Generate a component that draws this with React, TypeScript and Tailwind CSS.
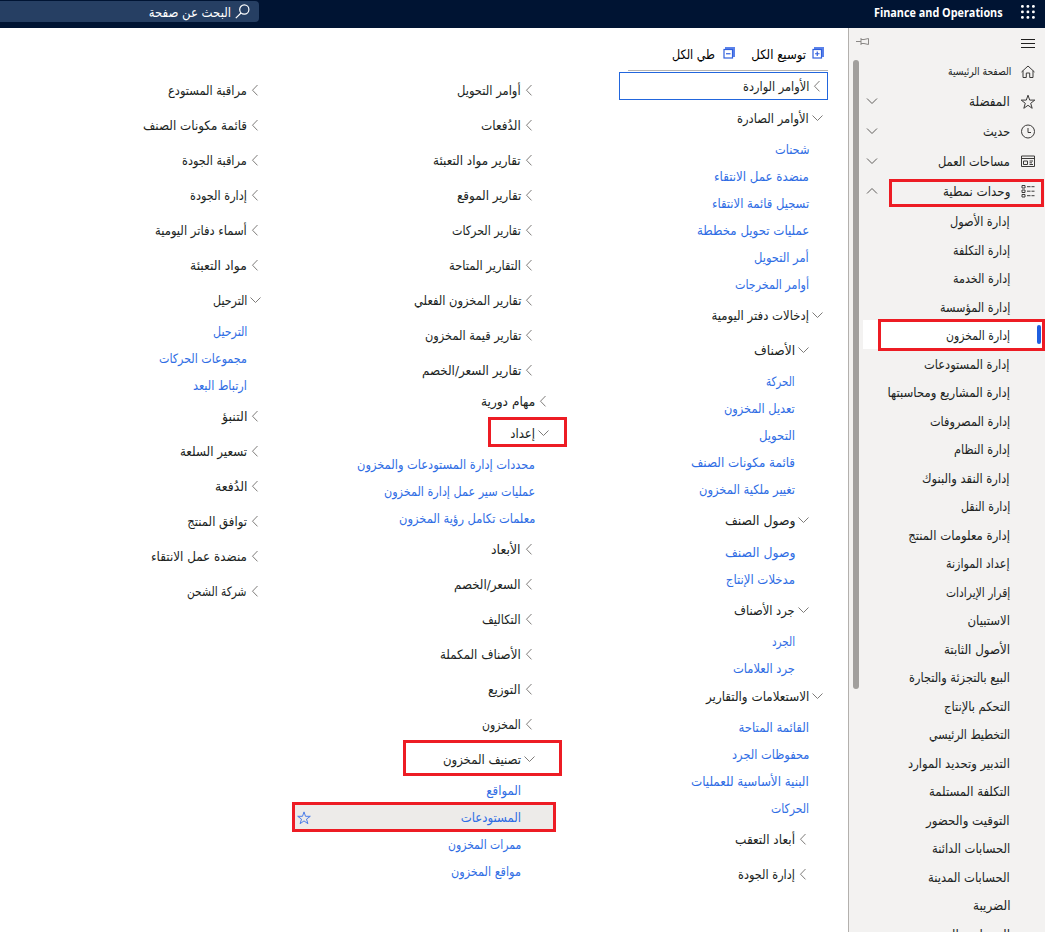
import { useLayoutEffect, useRef, useState, type ReactNode } from "react";

/** A label drawn at a given width, anchored to its reading start. */
function Label({ text, w, className = "", ltr = false }: { text: string; w: number; className?: string; ltr?: boolean }) {
  const ref = useRef<HTMLSpanElement>(null);
  const [scale, setScale] = useState(1);
  useLayoutEffect(() => {
    if (ref.current) setScale(w / ref.current.offsetWidth);
  }, [w]);
  return (
    <span
      ref={ref}
      dir={ltr ? "ltr" : "rtl"}
      className={`inline-block shrink-0 origin-right whitespace-nowrap ${className}`}
      style={{ transform: `scaleX(${scale})` }}
    >
      {text}
    </span>
  );
}

function Chevron({ open }: { open: boolean }) {
  return (
    <svg viewBox="0 0 12 12" className="mb-[2px] ml-[2px] h-3 w-3 shrink-0" fill="none" stroke="#7d7b79" strokeWidth="1">
      {open ? <path d="M1.5 3.5 6.5 8.5 11.5 3.5" /> : <path d="M8.5 1 3.5 6.2 8.5 11.4" />}
    </svg>
  );
}

type Row = { k: "h" | "o" | "l"; lv: 0 | 1; t: string; w: number; m?: string; mark?: string; hot?: boolean };

const h = (lv: 0 | 1, t: string, w: number, m?: string): Row => ({ k: "h", lv, t, w, m });
const o = (lv: 0 | 1, t: string, w: number, m?: string, mark?: string): Row => ({ k: "o", lv, t, w, m, mark });
const l = (lv: 0 | 1, t: string, w: number, m?: string): Row => ({ k: "l", lv, t, w, m });

const columnOne: Row[] = [
  o(0, "الأوامر الصادرة", 72, "mt-[1px]"),
  l(0, "شحنات", 34),
  l(0, "منضدة عمل الانتقاء", 95),
  l(0, "تسجيل قائمة الانتقاء", 97),
  l(0, "عمليات تحويل مخططة", 112),
  l(0, "أمر التحويل", 55),
  l(0, "أوامر المخرجات", 74),
  o(0, "إدخالات دفتر اليومية", 98),
  o(1, "الأصناف", 41),
  l(1, "الحركة", 29),
  l(1, "تعديل المخزون", 71),
  l(1, "التحويل", 36),
  l(1, "قائمة مكونات الصنف", 104),
  l(1, "تغيير ملكية المخزون", 96),
  o(1, "وصول الصنف", 70),
  l(1, "وصول الصنف", 70, "mt-[1px]"),
  l(1, "مدخلات الإنتاج", 69),
  o(1, "جرد الأصناف", 61),
  l(1, "الجرد", 23),
  l(1, "جرد العلامات", 62),
  o(0, "الاستعلامات والتقارير", 103, "-mt-[3px]"),
  l(0, "القائمة المتاحة", 70),
  l(0, "محفوظات الجرد", 77),
  l(0, "البنية الأساسية للعمليات", 118),
  l(0, "الحركات", 38),
  h(1, "أبعاد التعقب", 60),
  h(1, "إدارة الجودة", 57),
];

const columnTwo: Row[] = [
  h(1, "أوامر التحويل", 64),
  h(1, "الدُفعات", 40),
  h(1, "تقارير مواد التعبئة", 88),
  h(1, "تقارير الموقع", 64),
  h(1, "تقارير الحركات", 69),
  h(1, "التقارير المتاحة", 72),
  h(1, "تقارير المخزون الفعلي", 107),
  h(1, "تقارير قيمة المخزون", 97),
  h(1, "تقارير السعر/الخصم", 99),
  h(0, "مهام دورية", 54, "-mt-[4px]"),
  o(0, "إعداد", 25, "-mt-[3px]", "-right-[13px] top-[1px] h-[30px] w-[79px]"),
  l(0, "محددات إدارة المستودعات والمخزون", 178),
  l(0, "عمليات سير عمل إدارة المخزون", 151),
  l(0, "معلمات تكامل رؤية المخزون", 136),
  h(1, "الأبعاد", 30),
  h(1, "السعر/الخصم", 67),
  h(1, "التكاليف", 39),
  h(1, "الأصناف المكملة", 81),
  h(1, "التوزيع", 33),
  h(1, "المخزون", 39),
  o(1, "تصنيف المخزون", 78, "", "-right-[8px] -top-[2px] h-[36px] w-[159px]"),
  l(1, "المواقع", 35),
  { k: "l", lv: 1, t: "المستودعات", w: 60, hot: true, mark: "-right-[2px] -top-[2px] h-[30px] w-[264px]" },
  l(1, "ممرات المخزون", 73),
  l(1, "مواقع المخزون", 70),
];

const columnThree: Row[] = [
  h(1, "مراقبة المستودع", 79),
  h(1, "قائمة مكونات الصنف", 104),
  h(1, "مراقبة الجودة", 65),
  h(1, "إدارة الجودة", 57),
  h(1, "أسماء دفاتر اليومية", 92),
  h(1, "مواد التعبئة", 57),
  o(1, "الترحيل", 34),
  l(1, "الترحيل", 34),
  l(1, "مجموعات الحركات", 88),
  l(1, "ارتباط البعد", 54),
  h(1, "التنبؤ", 25),
  h(1, "تسعير السلعة", 67),
  h(1, "الدُفعة", 32),
  h(1, "توافق المنتج", 60),
  h(1, "منضدة عمل الانتقاء", 96),
  h(1, "شركة الشحن", 60),
];

function Mark({ at }: { at: string }) {
  return <span className={`pointer-events-none absolute z-10 border-[3px] border-[#ed1c24] ${at}`} />;
}

function MenuRow({ r }: { r: Row }) {
  const link = r.k === "l";
  const pad = link ? (r.lv ? "pr-[33px]" : "pr-[19px]") : r.lv ? "pr-[19px]" : "pr-[5px]";
  return (
    <li
      className={`relative flex items-center ${link ? "h-[27px] text-[#2f6de4]" : "h-[35px] text-[#201f1e]"} ${pad} ${r.m ?? ""} ${r.hot ? "bg-[#edebe9]" : ""}`}
    >
      {!link && <Chevron open={r.k === "o"} />}
      <Label text={r.t} w={r.w} />
      {r.hot && (
        <svg viewBox="0 0 14 14" className="mr-auto ml-[2px] h-[14px] w-[14px]" fill="none" stroke="#4a7ce8" strokeWidth="1">
          <path d="M7 .9 8.5 5.3H13.3L9.5 8.1 10.9 12.7 7 9.9 3.1 12.7 4.5 8.1 .7 5.3H5.5Z" />
        </svg>
      )}
      {r.mark && <Mark at={r.mark} />}
    </li>
  );
}

function ToggleIcon({ plus }: { plus: boolean }) {
  return (
    <svg viewBox="0 0 12 12" className="mb-[3px] h-3 w-3 shrink-0" fill="none" stroke="#2f5fdd">
      <path d="M2 1H11V10" stroke="#5b82ea" strokeWidth="2" />
      <rect x="1" y="2.5" width="8.5" height="8.5" strokeWidth="1.2" fill="#fff" />
      <path d={plus ? "M3 6.75H7.5M5.25 4.5V9" : "M3 6.75H7.5"} strokeWidth="1.2" />
    </svg>
  );
}

const modules: [string, number][] = [
  ["إدارة الأصول", 60],
  ["إدارة التكلفة", 57],
  ["إدارة الخدمة", 57],
  ["إدارة المؤسسة", 70],
  ["إدارة المخزون", 64],
  ["إدارة المستودعات", 86],
  ["إدارة المشاريع ومحاسبتها", 122],
  ["إدارة المصروفات", 80],
  ["إدارة النظام", 56],
  ["إدارة النقد والبنوك", 88],
  ["إدارة النقل", 49],
  ["إدارة معلومات المنتج", 102],
  ["إعداد الموازنة", 64],
  ["إقرار الإيرادات", 64],
  ["الاستبيان", 42],
  ["الأصول الثابتة", 66],
  ["البيع بالتجزئة والتجارة", 101],
  ["التحكم بالإنتاج", 66],
  ["التخطيط الرئيسي", 81],
  ["التدبير وتحديد الموارد", 102],
  ["التكلفة المستلمة", 81],
  ["التوقيت والحضور", 84],
  ["الحسابات الدائنة", 78],
  ["الحسابات المدينة", 82],
  ["الضريبة", 37],
  ["المبيعات والتسويق", 92],
];

const icons: Record<string, ReactNode> = {
  home: <path d="M1.5 8 8 2 14.5 8M3 6.8V13.5H6.3V9H9.7V13.5H13V6.8" />,
  star: <path d="M8 1.2 9.7 6.1H14.8L10.7 9.3 12.2 14.3 8 11.3 3.8 14.3 5.3 9.3 1.2 6.1H6.3Z" />,
  clock: (
    <>
      <circle cx="8" cy="7.5" r="6.5" />
      <path d="M8 4V8.5H11" />
    </>
  ),
  board: <path d="M1.5 2H14.5V12.5H1.5ZM1.5 4.5H14.5M3.5 7H7.5V10.5H3.5ZM9.5 7H13M9.5 8.8H12M9.5 10.5H13" />,
  list: <path d="M2 1.5H5V4H2ZM2 6H5V8.5H2ZM2 10.5H5V13H2ZM7 2.7H10.5M11.5 2.7H14.5M7 7.2H10.5M11.5 7.2H14.5M7 11.7H10.5M11.5 11.7H14.5" />,
};

const nav: { id: string; t: string; w: number; arrow?: "down" | "up" }[] = [
  { id: "home", t: "الصفحة الرئيسية", w: 63 },
  { id: "star", t: "المفضلة", w: 41, arrow: "down" },
  { id: "clock", t: "حديث", w: 27, arrow: "down" },
  { id: "board", t: "مساحات العمل", w: 72, arrow: "down" },
  { id: "list", t: "وحدات نمطية", w: 67, arrow: "up" },
];

function Sidebar() {
  return (
    <aside className="relative flex h-full w-[197px] shrink-0 flex-col overflow-hidden border-l border-[#b3b0ad] bg-[#f3f2f1] text-[#201f1e]">
      <div className="flex h-[29px] shrink-0 items-center justify-between pr-[9px] pl-[7px]">
        <svg viewBox="0 0 16 11" className="mt-[2px] h-[11px] w-4" stroke="#201f1e" strokeWidth="1">
          <path d="M1 1.5H15M1 5.5H15M1 9.5H15" />
        </svg>
        <svg viewBox="0 0 14 9" className="mb-[3px] h-[9px] w-[14px]" fill="none" stroke="#8a8886" strokeWidth="1">
          <path d="M0 4.5H5M5 1V8M5 2.5H8L12.5 1.5V7.5L8 6.5H5" />
        </svg>
      </div>
      {nav.map((n) => (
        <div key={n.id} className="relative flex h-[30px] shrink-0 items-center pr-[9px]">
          <svg viewBox="0 0 16 16" className="h-4 w-4" fill="none" stroke="#3b3a39" strokeWidth="1">
            {icons[n.id]}
          </svg>
          <Label text={n.t} w={n.w} className={n.id === "home" ? "mr-[9px] text-[11px]" : "mr-[10px]"} />
          {n.arrow && (
            <svg viewBox="0 0 12 8" className="mr-auto mb-[3px] ml-[17px] h-2 w-3" fill="none" stroke="#605e5c" strokeWidth="1">
              <path d={n.arrow === "down" ? "M1 1.5 6 6.5 11 1.5" : "M1 6.5 6 1.5 11 6.5"} />
            </svg>
          )}
          {n.id === "list" && <Mark at="right-[1px] top-[2px] h-[28px] w-[155px]" />}
        </div>
      ))}
      <ul className="pt-[1px]">
        {modules.map(([t, w], i) => (
          <li key={t} className="relative ml-[14px] flex h-[28.5px] items-center pr-[35px]">
            {i === 4 && <span className="absolute inset-x-0 -top-[2px] h-[29px] bg-white" />}
            <Label text={t} w={w} />
            {i === 4 && (
              <>
                <span className="absolute top-[3px] right-[4px] h-[19px] w-[4px] rounded-sm bg-[#1f5fe0]" />
                <Mark at="right-0 -top-[3px] h-[32px] w-[167px]" />
              </>
            )}
          </li>
        ))}
      </ul>
      <span className="absolute top-[32px] left-[4px] h-[629px] w-[6px] rounded-full bg-[#a19f9d]" />
    </aside>
  );
}

function Column({ rows, children }: { rows: Row[]; children?: ReactNode }) {
  return (
    <div className="w-[259px] shrink-0">
      {children}
      <ul>
        {rows.map((r, i) => (
          <MenuRow key={i} r={r} />
        ))}
      </ul>
    </div>
  );
}

export default function App() {
  return (
    <div
      dir="rtl"
      className="flex h-[932px] w-[1045px] flex-col overflow-hidden bg-white font-['DejaVu_Sans_Condensed','DejaVu_Sans',sans-serif] text-[13px] leading-[18px]"
    >
      <header className="flex h-7 shrink-0 items-start justify-between bg-[#001433] text-white">
        <div className="flex h-[26px] items-center pr-[10px]">
          <svg viewBox="0 0 14 14" className="mb-[2px] h-[14px] w-[14px]" fill="#fff">
            {[0, 5.5, 11].map((y) => [0, 5.5, 11].map((x) => <rect key={`${x}-${y}`} x={x} y={y} width="2.8" height="2.8" rx="1.2" />))}
          </svg>
          <Label ltr text="Finance and Operations" w={129} className="mr-[18px] font-['Open_Sans','Noto_Sans',sans-serif] text-[12px] font-bold" />
        </div>
        <div className="mt-[1px] flex h-[21px] w-[259px] items-center rounded-l-none rounded-r-sm bg-[#263f63] pr-[9px]">
          <svg viewBox="0 0 15 15" className="h-[15px] w-[15px]" fill="none" stroke="#fff" strokeWidth="1.2">
            <circle cx="9.3" cy="5.5" r="4.6" />
            <path d="M6 9 .8 14.2" />
          </svg>
          <Label text="البحث عن صفحة" w={82} className="mr-[4px] mt-[2px]" />
        </div>
      </header>
      <div className="flex min-h-0 flex-1">
        <Sidebar />
        <main className="flex min-w-0 flex-1 gap-[15px] pr-[20px]">
          <Column rows={columnOne}>
            <div className="flex h-[42px] items-center pt-[11px] pr-[4px]">
              <ToggleIcon plus />
              <Label text="توسيع الكل" w={55} className="mr-[6px]" />
              <span className="flex-1" />
              <span className="flex w-[166px] items-center">
                <ToggleIcon plus={false} />
                <Label text="طي الكل" w={43} className="mr-[8px]" />
              </span>
            </div>
            <div className="mb-[1px] h-px w-[200px] bg-[#b5b3b1]" />
            <div className="mt-[1px] flex h-[28px] w-[209px] items-center border border-[#2266dd] pt-[2px] pr-[4px] text-[#201f1e]">
              <Chevron open={false} />
              <Label text="الأوامر الواردة" w={66} />
            </div>
          </Column>
          <div className="pt-[45px]">
            <Column rows={columnTwo} />
          </div>
          <div className="pt-[45px]">
            <Column rows={columnThree} />
          </div>
        </main>
      </div>
    </div>
  );
}
